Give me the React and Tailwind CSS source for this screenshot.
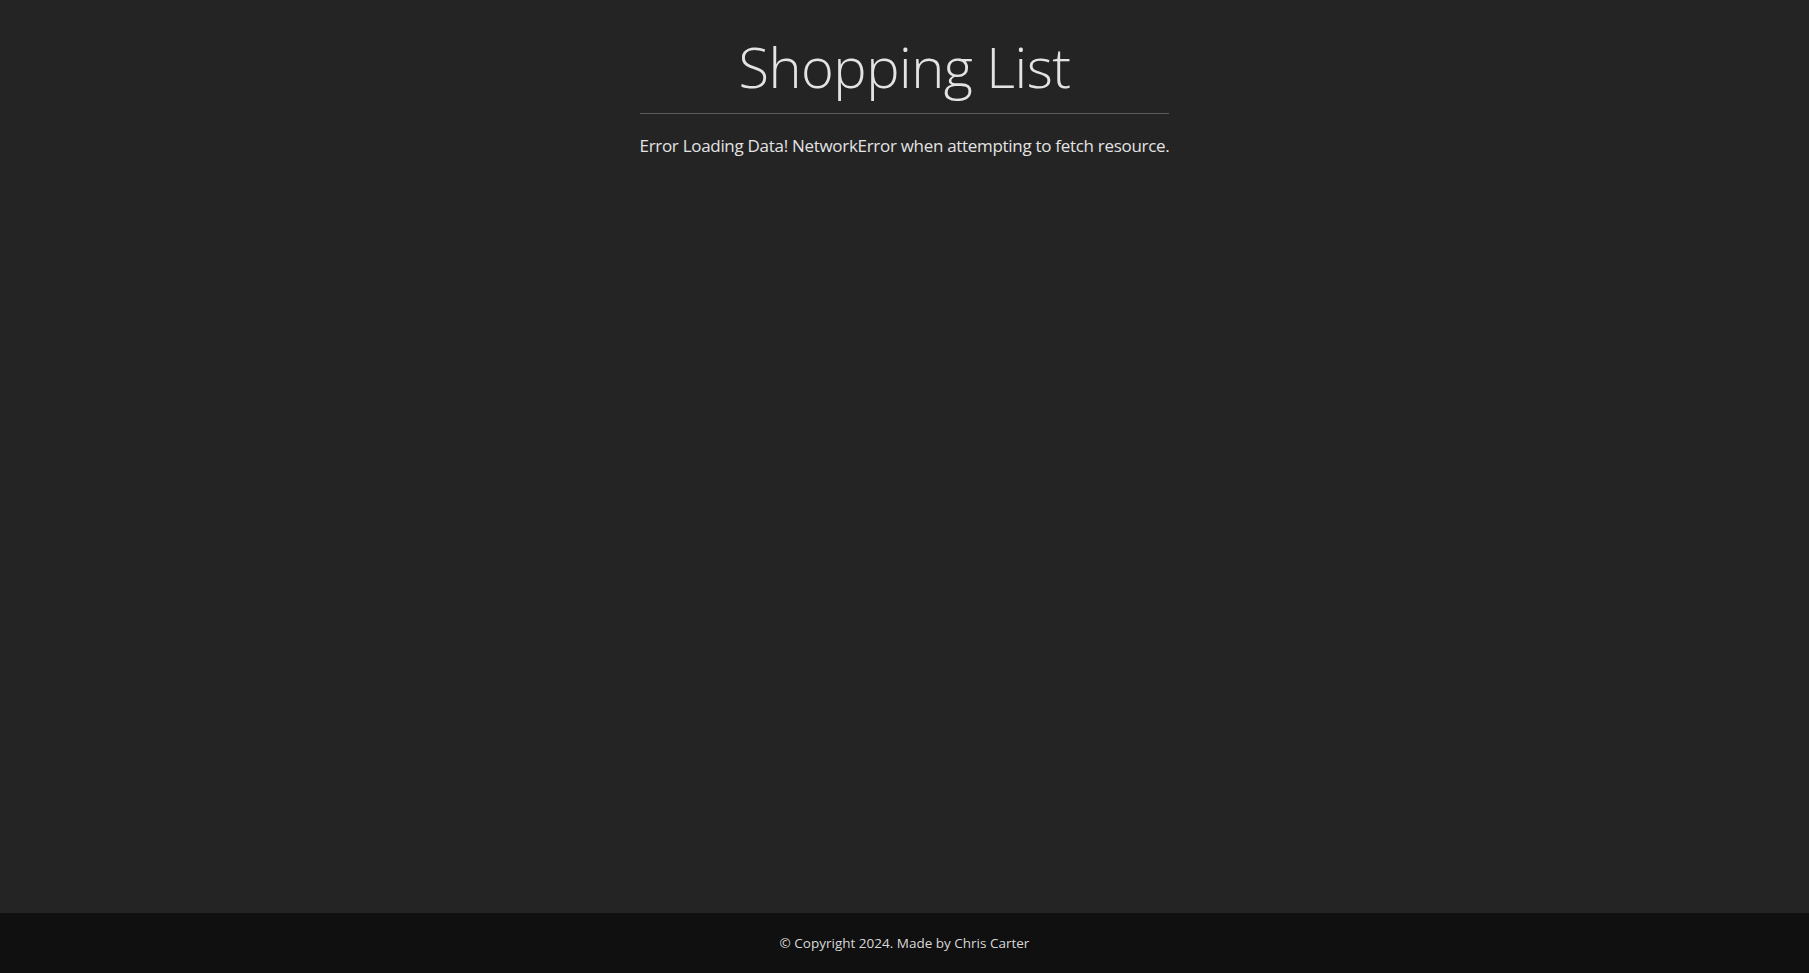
import React from 'react'

const App = () => {
  return (
    <div className="flex min-h-screen flex-col bg-[#242424] text-[#e3e3e3]" style={{ fontFamily: '"Open Sans", "Noto Sans", sans-serif' }}>
      {/* Main */}
      <main className="flex-1">
        <div className="mx-auto w-fit pt-[34px]">
          <h1 className="border-b border-[#5a5a5a] pb-[15px] text-center text-[56px] font-light leading-[64px] tracking-[-0.5px]">
            Shopping List
          </h1>
          <p className="mt-[20px] text-[17px] leading-[24px] tracking-[-0.3px]">
            Error Loading Data! NetworkError when attempting to fetch resource.
          </p>
        </div>
      </main>

      {/* Footer */}
      <footer className="flex h-[60px] shrink-0 items-center justify-center bg-[#101010] text-[13.5px] text-[#d8d8d8]">
        © Copyright 2024. Made by Chris Carter
      </footer>
    </div>
  )
}

export default App
